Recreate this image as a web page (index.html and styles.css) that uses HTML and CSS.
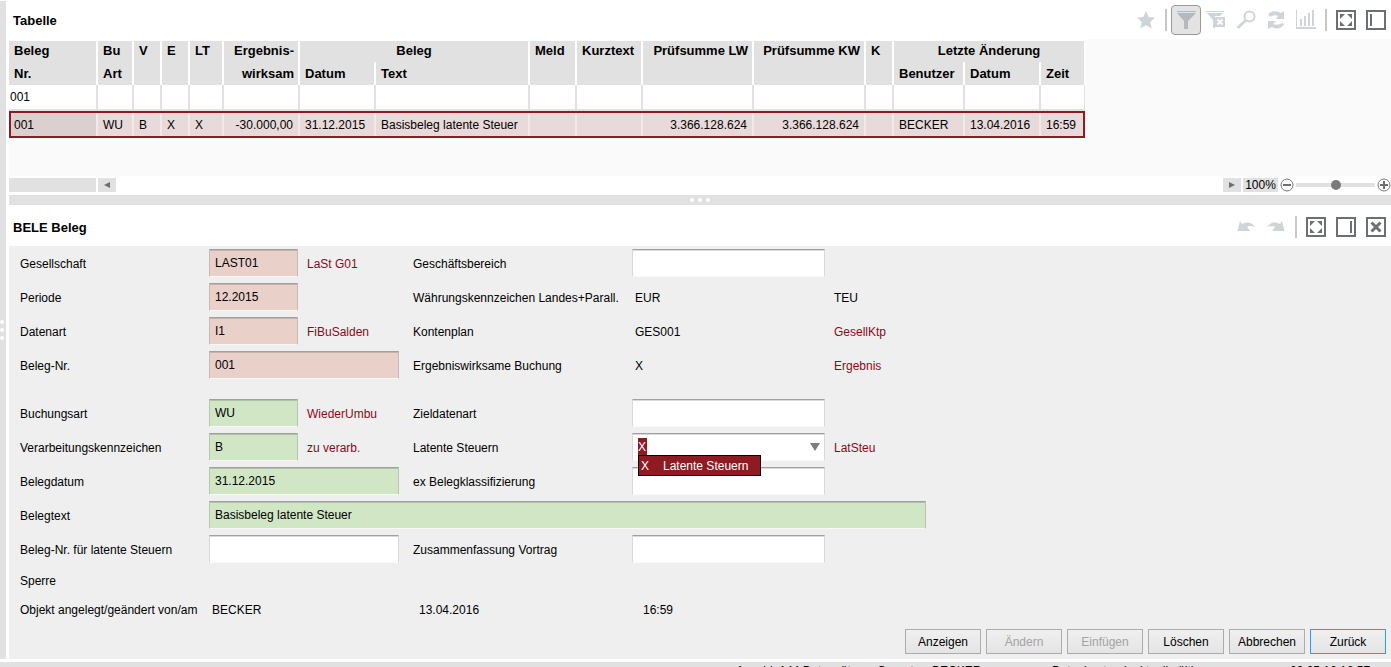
FILE: index.html
```
<!DOCTYPE html>
<html lang="de">

<head>
  <meta charset="utf-8">
  <title>BELE Beleg</title>
  <link rel="stylesheet" href="styles.css">
</head>

<body>
  <div class="workspace">
    <div class="rail">
      <i></i><i></i><i></i>
    </div>
    <main class="content">
      <section class="panel">
        <header class="panel-head">
          <h2>Tabelle</h2>
          <div class="toolbar">
            <button class="tool" aria-label="Favorit">
              <svg width="20" height="20"><path class="light" d="M10 1l2.7 6 6.3.6-4.7 4.3 1.4 6.6L10 15.2l-5.7 3.3 1.4-6.6L1 7.600l6.300-.6z"/></svg>
            </button>
            <span class="sep"></span>
            <button class="tool active" aria-label="Filter">
              <svg width="20" height="20"><path class="mid" d="M1 1h19v1H1zM1 3h19l-8 8v8H8v-8z"/></svg>
            </button>
            <button class="tool" aria-label="Filter entfernen">
              <svg width="20" height="20"><path class="light" d="M0 1h18v1H0zM1 3h16l-3 3H9v12H7v-8z"/><path class="light" d="M9 7h10v10H9z"/><path d="M11.500 9.500l5 5m0-5l-5 5" stroke="#fff" stroke-width="2"/></svg>
            </button>
            <button class="tool" aria-label="Suchen">
              <svg width="20" height="20"><circle cx="13.500" cy="6.500" r="5" fill="none" stroke="#cfd4d8" stroke-width="2"/><path d="M9.500 10.500L1.500 18" stroke="#cfd4d8" stroke-width="3"/></svg>
            </button>
            <button class="tool" aria-label="Aktualisieren">
              <svg width="20" height="20"><path class="light" d="M2 4q6-5 13-1l3-2v8h-8l2-3q-4-2-8 1zM18 15q-6 6-12 2l-4 2v-8h8l-3 3q4 2 10-1z"/></svg>
            </button>
            <button class="tool" aria-label="Diagramm">
              <svg width="20" height="20"><path class="light" d="M0 0h1v17h19v2H0zM4 9h2v7H4zM8 6h2v10H8zM12 3h2v13h-2zM16 0h2v16h-2z"/></svg>
            </button>
            <span class="sep"></span>
            <button class="tool" aria-label="Maximieren">
              <svg width="20" height="20"><path class="frame" d="M1 1h18v18H1z"/><path class="dark" d="M4 4h5L4 9zM11 4h5v5zM4 11v5h5zM16 11v5h-5z"/></svg>
            </button>
            <button class="tool" aria-label="Links andocken">
              <svg width="20" height="20"><path class="frame" d="M1 1h18v18H1z"/><path class="dark" d="M4 4h2v12H4z"/></svg>
            </button>
          </div>
        </header>

        <div class="table-area">
          <table>
            <colgroup>
              <col class="w-nr"><col class="w-art"><col class="w-flag"><col class="w-flag"><col class="w-lt">
              <col class="w-date"><col class="w-date"><col class="w-text"><col class="w-meld"><col class="w-kurz">
              <col class="w-lw"><col class="w-kw"><col class="w-flag"><col class="w-user"><col class="w-date"><col class="w-time">
            </colgroup>
            <thead>
              <tr>
                <th>Beleg</th>
                <th>Bu</th>
                <th>V</th>
                <th>E</th>
                <th>LT</th>
                <th class="num">Ergebnis-</th>
                <th class="group" colspan="2">Beleg</th>
                <th>Meld</th>
                <th>Kurztext</th>
                <th class="num">Prüfsumme LW</th>
                <th class="num">Prüfsumme KW</th>
                <th>K</th>
                <th class="group" colspan="3">Letzte Änderung</th>
              </tr>
              <tr>
                <th>Nr.</th>
                <th>Art</th>
                <th></th>
                <th></th>
                <th></th>
                <th class="num">wirksam</th>
                <th>Datum</th>
                <th>Text</th>
                <th></th>
                <th></th>
                <th></th>
                <th></th>
                <th></th>
                <th>Benutzer</th>
                <th>Datum</th>
                <th>Zeit</th>
              </tr>
            </thead>
            <tbody>
              <tr class="filter">
                <td><input aria-label="Filter Beleg Nr." value="001"></td>
                <td><input aria-label="Filter Bu Art"></td>
                <td><input aria-label="Filter V"></td>
                <td><input aria-label="Filter E"></td>
                <td><input aria-label="Filter LT"></td>
                <td><input aria-label="Filter Ergebniswirksam"></td>
                <td><input aria-label="Filter Belegdatum"></td>
                <td><input aria-label="Filter Belegtext"></td>
                <td><input aria-label="Filter Meld"></td>
                <td><input aria-label="Filter Kurztext"></td>
                <td><input aria-label="Filter Prüfsumme LW"></td>
                <td><input aria-label="Filter Prüfsumme KW"></td>
                <td><input aria-label="Filter K"></td>
                <td><input aria-label="Filter Benutzer"></td>
                <td><input aria-label="Filter Datum"></td>
                <td><input aria-label="Filter Zeit"></td>
              </tr>
              <tr class="selected">
                <td>001</td>
                <td>WU</td>
                <td>B</td>
                <td>X</td>
                <td>X</td>
                <td class="num">-30.000,00</td>
                <td>31.12.2015</td>
                <td>Basisbeleg latente Steuer</td>
                <td></td>
                <td></td>
                <td class="num">3.366.128.624</td>
                <td class="num">3.366.128.624</td>
                <td></td>
                <td>BECKER</td>
                <td>13.04.2016</td>
                <td>16:59</td>
              </tr>
            </tbody>
          </table>
        </div>

        <div class="scroll-row">
          <span class="scroll-fixed"></span>
          <button class="scroll-btn" aria-label="Nach links"><svg width="6" height="6"><path class="dark" d="M6 0v6L0 3z"/></svg></button>
          <span class="spacer"></span>
          <button class="scroll-btn" aria-label="Nach rechts"><svg width="6" height="6"><path class="dark" d="M0 0v6l6-3z"/></svg></button>
          <label class="zoom-value" for="zoom">100%</label>
          <button class="zoom-btn" aria-label="Verkleinern"><svg width="14" height="14"><circle cx="7" cy="7" r="6" fill="none" stroke="#777" /><path class="dark" d="M3 6h8v2H3z"/></svg></button>
          <input id="zoom" class="zoom-range" type="range" min="0" max="200" value="100">
          <button class="zoom-btn" aria-label="Vergrößern"><svg width="14" height="14"><circle cx="7" cy="7" r="6" fill="none" stroke="#777" /><path class="dark" d="M3 6h3V3h2v3h3v2H8v3H6V8H3z"/></svg></button>
        </div>
      </section>

      <div class="splitter">
        <i></i><i></i><i></i>
      </div>

      <section class="panel detail">
        <header class="panel-head detail-head">
          <h2>BELE Beleg</h2>
          <div class="toolbar">
            <button class="tool" aria-label="Rückgängig">
              <svg width="20" height="20"><path class="light" d="M4 4l2 3q8-4 13 3-5-2-8 0l3 4H1.500z"/></svg>
            </button>
            <button class="tool" aria-label="Wiederholen">
              <svg width="20" height="20"><path class="light" d="M16 4l-2 3q-8-4-13 3 5-2 8 0l-3 4h12.500z"/></svg>
            </button>
            <span class="sep"></span>
            <button class="tool" aria-label="Maximieren">
              <svg width="20" height="20"><path class="frame" d="M1 1h18v18H1z"/><path class="dark" d="M4 4h5L4 9zM11 4h5v5zM4 11v5h5zM16 11v5h-5z"/></svg>
            </button>
            <button class="tool" aria-label="Rechts andocken">
              <svg width="20" height="20"><path class="frame" d="M1 1h18v18H1z"/><path class="dark" d="M14 4h2v12h-2z"/></svg>
            </button>
            <button class="tool" aria-label="Schließen">
              <svg width="20" height="20"><path class="frame" d="M1 1h18v18H1z"/><path d="M5.500 5.500l9 9m0-9l-9 9" stroke="#6d7073" stroke-width="3"/></svg>
            </button>
          </div>
        </header>

        <form class="detail-form">
          <div class="fields">
            <label for="gesellschaft">Gesellschaft</label>
            <input id="gesellschaft" class="key" value="LAST01">
            <span class="hint">LaSt G01</span>
            <label for="bereich">Geschäftsbereich</label>
            <input id="bereich">
            <span></span>

            <label for="periode">Periode</label>
            <input id="periode" class="key" value="12.2015">
            <span></span>
            <span>Währungskennzeichen Landes+Parall.</span>
            <span class="value">EUR</span>
            <span>TEU</span>

            <label for="datenart">Datenart</label>
            <input id="datenart" class="key" value="I1">
            <span class="hint">FiBuSalden</span>
            <span>Kontenplan</span>
            <span class="value">GES001</span>
            <span class="hint">GesellKtp</span>

            <label for="belegnr">Beleg-Nr.</label>
            <input id="belegnr" class="key wide" value="001">
            <span>Ergebniswirksame Buchung</span>
            <span class="value">X</span>
            <span class="hint">Ergebnis</span>
          </div>

          <div class="fields">
            <label for="buchungsart">Buchungsart</label>
            <input id="buchungsart" class="must" value="WU">
            <span class="hint">WiederUmbu</span>
            <label for="ziel">Zieldatenart</label>
            <input id="ziel">
            <span></span>

            <label for="kennz">Verarbeitungskennzeichen</label>
            <input id="kennz" class="must" value="B">
            <span class="hint">zu verarb.</span>
            <label for="latent">Latente Steuern</label>
            <div class="combo">
              <select id="latent">
                <option>X</option>
              </select>
              <svg class="arrow" width="10" height="8"><path fill="#7c8083" d="M0 0h10L5 8z"/></svg>
              <ul class="menu">
                <li><span>X</span><span>Latente Steuern</span></li>
              </ul>
            </div>
            <span class="hint">LatSteu</span>

            <label for="datum">Belegdatum</label>
            <input id="datum" class="must wide" value="31.12.2015">
            <label for="klasse">ex Belegklassifizierung</label>
            <input id="klasse">
            <span></span>

            <label for="text">Belegtext</label>
            <input id="text" class="must full" value="Basisbeleg latente Steuer">

            <label for="nrlatent">Beleg-Nr. für latente Steuern</label>
            <input id="nrlatent" class="wide">
            <label for="vortrag">Zusammenfassung Vortrag</label>
            <input id="vortrag">
            <span></span>
          </div>

          <div class="info">
            <span>Sperre</span>
          </div>
          <div class="info">
            <span>Objekt angelegt/geändert von/am</span>
            <span class="value">BECKER</span>
            <span class="value">13.04.2016</span>
            <span class="value">16:59</span>
          </div>

          <div class="actions">
            <button type="button">Anzeigen</button>
            <button type="button" disabled>Ändern</button>
            <button type="button" disabled>Einfügen</button>
            <button type="button">Löschen</button>
            <button type="button">Abbrechen</button>
            <button type="button" class="default">Zurück</button>
          </div>
        </form>
      </section>
    </main>
  </div>

  <footer class="status">
    <span>Anzahl: 144 Datensätze</span>
    <span>Operator:</span>
    <span>BECKER</span>
    <span>Datenbestand: aktuell gültig</span>
    <span>09.05.16 16:57</span>
  </footer>
</body>

</html>
```
FILE: styles.css
```
* {
  box-sizing: border-box;
}

body {
  margin: 0;
  height: 100vh;
  overflow: hidden;
  display: flex;
  flex-direction: column;
  background: #fff;
  color: #000;
  font: 12px/16px "Liberation Sans", Arial, sans-serif;
}

button,
input,
select {
  font: inherit;
  color: inherit;
  margin: 0;
  border: 0;
  border-radius: 0;
  outline: none;
}

.workspace {
  flex: 1;
  min-height: 0;
  display: flex;
  gap: 3px;
  margin-bottom: 3px;
}

.rail {
  width: 6px;
  margin-top: 1px;
  background: #e1e1e1;
  display: flex;
  flex-direction: column;
  justify-content: center;
  gap: 4px;
}

.rail i,
.splitter i {
  width: 4px;
  height: 4px;
  border-radius: 50%;
  background: #fff;
}

.content {
  flex: 1;
  min-width: 0;
  display: flex;
  flex-direction: column;
}

/* panel headers */

.panel-head {
  height: 39px;
  padding-left: 4px;
  display: flex;
  align-items: center;
  justify-content: space-between;
}

.detail-head {
  height: 41px;
  padding-top: 3px;
}

h2 {
  margin: 0;
  padding-top: 2px;
  font-size: 13px;
  font-weight: bold;
}

.toolbar {
  display: flex;
  align-items: center;
}

.tool {
  width: 30px;
  height: 30px;
  padding: 0;
  display: flex;
  align-items: center;
  justify-content: center;
  background: none;
}

.tool.active {
  background: #e3e3e3;
  border: 1px solid #999;
  border-radius: 4px;
}

.sep {
  width: 2px;
  height: 22px;
  margin: 0 4px;
  background: #c8c8c8;
}

.light {
  fill: #cfd4d8;
}

.mid {
  fill: #b4b9bd;
}

.dark {
  fill: #6d7073;
}

.frame {
  fill: none;
  stroke: #6d7073;
  stroke-width: 2;
}

/* table */

.table-area {
  height: 137px;
  background: #fafafa;
}

table {
  width: 1076px;
  table-layout: fixed;
  border-collapse: separate;
  border-spacing: 0;
  border-top: 2px solid #fff;
}

.w-nr { width: 89px; }
.w-art { width: 36px; }
.w-flag { width: 28px; }
.w-lt { width: 34px; }
.w-date { width: 76px; }
.w-text { width: 154px; }
.w-meld { width: 47px; }
.w-kurz { width: 66px; }
.w-lw { width: 111px; }
.w-kw { width: 112px; }
.w-user { width: 71px; }
.w-time { width: 44px; }

th,
td {
  padding: 0 5px;
  text-align: left;
  white-space: nowrap;
  border-right: 2px solid #fff;
}

th {
  height: 23px;
  background: #e1e1e1;
  font-size: 13px;
  line-height: 23px;
}

thead tr:first-child th {
  height: 21px;
  line-height: 19px;
  vertical-align: top;
}

th:last-child {
  border-right-width: 1px;
}

.num {
  text-align: right;
}

th.num {
  padding-right: 4px;
}

th.group {
  text-align: center;
}

.filter td {
  height: 26px;
  padding: 0;
  background: #fff;
  border-right-color: #e1e1e1;
  border-bottom: 2px solid #e1e1e1;
}

.filter td:last-child {
  border-right-width: 1px;
}

.filter input {
  display: block;
  width: 100%;
  height: 24px;
  padding: 0 1px;
  background: none;
}

.selected {
  outline: 2px solid #8f1a21;
  outline-offset: -2px;
}

.selected td {
  height: 27px;
  background: #e8dada;
  border-right-color: #f3e9e9;
}

.selected td:first-child {
  background: #dccfcf;
}

/* scrollbar and zoom */

.scroll-row {
  height: 19px;
  padding-bottom: 1px;
  display: flex;
  align-items: center;
  gap: 2px;
}

.scroll-fixed {
  width: 87px;
  height: 14px;
  background: #e1e1e1;
}

.scroll-btn {
  width: 18px;
  height: 14px;
  padding: 0;
  display: flex;
  align-items: center;
  justify-content: center;
  background: #e1e1e1;
}

.spacer {
  flex: 1;
}

.zoom-value {
  width: 35px;
  height: 14px;
  line-height: 15px;
  text-align: center;
  background: #e1e1e1;
}

.zoom-btn {
  width: 14px;
  height: 14px;
  padding: 0;
  display: flex;
  background: none;
}

.zoom-range {
  appearance: none;
  width: 79px;
  height: 14px;
  background: linear-gradient(#e1e1e1, #e1e1e1) center / 100% 4px no-repeat;
}

.zoom-range::-webkit-slider-thumb {
  appearance: none;
  width: 10px;
  height: 10px;
  border-radius: 50%;
  background: #7a7a7a;
}

.splitter {
  height: 10px;
  display: flex;
  align-items: center;
  justify-content: center;
  gap: 4px;
  background: #e1e1e1;
}

/* detail form */

.detail {
  flex: 1;
  display: flex;
  flex-direction: column;
}

.detail-form {
  flex: 1;
  padding: 0 5px 5px 11px;
  display: flex;
  flex-direction: column;
  background: #efefef;
}

.fields {
  display: grid;
  grid-template-columns: 189px 98px 106px 219px 202px 1fr;
  grid-auto-rows: 34px;
  align-items: center;
  white-space: nowrap;
}

.fields + .fields {
  margin-top: 14px;
}

.fields > label,
.fields > span {
  padding-top: 2px;
}

.fields input,
.fields select {
  width: 193px;
  height: 28px;
  padding: 0 5px 1px;
  background: #fff;
  border: 1px solid #d9d9d9;
  border-top-color: #a0a0a0;
  border-bottom-color: #f8f8f8;
  box-shadow: inset 0 1px rgba(0, 0, 0, 0.15);
}

.fields .key,
.fields .must {
  width: 89px;
  background: #e9d0c9;
  border-left-color: #c9b9b5;
  border-right-color: #c9b9b5;
}

.fields .must {
  background: #d1e6c5;
  border-left-color: #b7c6ae;
  border-right-color: #b7c6ae;
}

.fields .wide {
  width: 190px;
  grid-column: span 2;
}

.fields .full {
  width: 717px;
  grid-column: span 5;
}

.hint {
  color: #8b0a1a;
}

.fields .value,
.info .value {
  padding-left: 3px;
}

.combo {
  position: relative;
  width: 193px;
  height: 28px;
}

/* the current value is shown as selected text */
.fields .combo select {
  appearance: none;
  color: #fff;
  background: linear-gradient(#8f1a21, #8f1a21) 5px 4px / 9px 17px no-repeat #fff;
}

.arrow {
  position: absolute;
  top: 10px;
  right: 5px;
  pointer-events: none;
}

.menu {
  position: absolute;
  z-index: 1;
  top: 22px;
  left: 6px;
  min-width: 123px;
  margin: 0;
  padding: 2px 10px 1px 2px;
  list-style: none;
  color: #fff;
  background: #8f1a21;
  border: 1px solid #000;
}

.menu li {
  display: grid;
  grid-template-columns: 22px auto;
}

.info {
  height: 29px;
  display: grid;
  grid-template-columns: 189px 207px 224px 1fr;
  align-items: center;
  white-space: nowrap;
}

.actions {
  margin-top: auto;
  display: flex;
  justify-content: flex-end;
  gap: 5px;
}

.actions button {
  width: 76px;
  height: 25px;
  padding: 0;
  background: linear-gradient(#f0f0f0, #e4e4e4);
  border: 1px solid #acacac;
}

.actions button:disabled {
  color: #a3a3a3;
}

.actions .default {
  border-color: #3399ff;
}

.status {
  height: 5px;
  padding-top: 1px;
  overflow: hidden;
  display: grid;
  grid-template-columns: 141px 55px 120px 238px 101px;
  justify-content: end;
  white-space: nowrap;
  background: #e1e1e1;
}
```
